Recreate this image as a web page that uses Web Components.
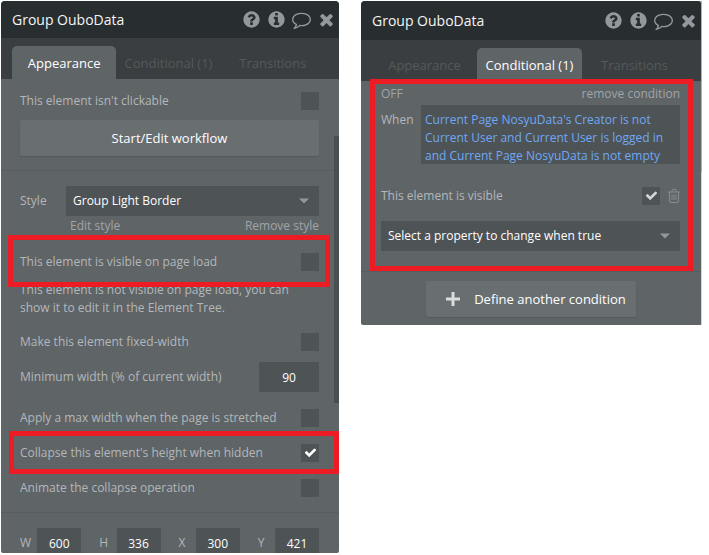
<!DOCTYPE html>
<html lang="en">
<head>
<meta charset="utf-8">
<title>Group OuboData</title>
<style>
    body {
        margin: 0;
        padding: 1px 7px 1px 1px;
        box-sizing: border-box;
        display: grid;
        grid-template-columns: minmax(0, 338fr) minmax(0, 341fr);
        gap: 22px;
        align-items: start;
        background: #ffffff;
        color: #b3b7ba;
        font: 12px/18px "Open Sans", "Noto Sans", sans-serif;
        --panel: #5f6467;
        --field: #4e5356;
        --button: #696e71;
        --line: #575c5f;
        --marker: #ed1c24;
    }
    property-panel.appearance {
        max-height: calc(100vh - 3px);
    }
    /* strip of the canvas showing along the right edge */
    property-panel.conditional {
        --header-height: 39px;
        border-right: 1px solid;
        border-image: linear-gradient(#d0b45c 171px, #d2d4d5 0) 1;
    }
    a {
        color: #a0a5a8;
        text-decoration: none;
    }
    p {
        margin: 0;
    }
    hr {
        margin: 0;
        border: 0;
        border-top: 1px solid var(--line);
    }
    .section {
        display: flex;
        flex-direction: column;
        padding: 0 20px 0 19px;
    }
    .first {
        padding-top: 4px;
        padding-bottom: 14px;
        gap: 2px;
    }
    .second {
        padding-top: 15px;
        padding-bottom: 7px;
    }
    .links {
        display: flex;
        justify-content: space-between;
        padding: 1px 0 9px 50px;
    }
    .note {
        padding: 2px 0 7px;
    }
    .wide-value {
        padding: 3px 0 8px;
    }
    .sizes {
        display: grid;
        grid-template-columns: repeat(4, minmax(0, 1fr));
        gap: 18px;
        padding-top: 15px;
        padding-bottom: 15px;
        --field-width: 44px;
    }
    .condition {
        padding: 4px 21px 20px 20px;
    }
    .condition-head {
        display: flex;
        justify-content: space-between;
        padding-bottom: 2px;
        color: #a0a5a8;
    }
    .property {
        display: grid;
        grid-template-columns: minmax(0, 1fr) 12px;
        gap: 8px;
        align-items: center;
        padding: 14px 0 8px;
    }
    .footer {
        display: flex;
        justify-content: center;
        padding: 9px 20px 8px;
    }
    marker-frame.load { --frame-inset: -9px -11px -8px -12px; }
    marker-frame.collapse { --frame-inset: -4px -20px -4px -11px; }
    marker-frame.whole { --frame-inset: -2px 8px 0 9px; }
    check-row.soft { --tick: #d3d6d8; }
    .footer panel-button { --button-padding: 0 10px 0 20px; }
</style>
</head>
<body>

<property-panel class="appearance" name="Group OuboData" active="0">
    <div class="section first">
        <check-row>This element isn't clickable</check-row>
        <panel-button>Start/Edit workflow</panel-button>
    </div>
    <hr>
    <div class="section second">
        <select-field label="Style" value="Group Light Border"></select-field>
        <div class="links"><a href="#edit">Edit style</a><a href="#remove">Remove style</a></div>
        <marker-frame class="load"><check-row>This element is visible on page load</check-row></marker-frame>
        <p class="note">This element is not visible on page load, you can show it to edit it in the Element Tree.</p>
        <check-row>Make this element fixed-width</check-row>
        <value-field class="wide-value" value="90">Minimum width (% of current width)</value-field>
        <check-row>Apply a max width when the page is stretched</check-row>
        <marker-frame class="collapse"><check-row checked>Collapse this element's height when hidden</check-row></marker-frame>
        <check-row>Animate the collapse operation</check-row>
    </div>
    <hr>
    <div class="section sizes">
        <value-field value="600">W</value-field>
        <value-field value="336">H</value-field>
        <value-field value="300">X</value-field>
        <value-field value="421">Y</value-field>
    </div>
    <scroll-thumb slot="over"></scroll-thumb>
</property-panel>

<property-panel class="conditional" name="Group OuboData" active="1">
    <marker-frame class="whole">
        <div class="section condition">
            <div class="condition-head"><span>OFF</span><a href="#remove-condition">remove condition</a></div>
            <expression-field label="When" value="Current Page NosyuData's Creator is not Current User and Current User is logged in and Current Page NosyuData is not empty"></expression-field>
            <div class="property">
                <check-row checked class="soft">This element is visible</check-row>
                <icon-button icon="trash" label="Delete property"></icon-button>
            </div>
            <select-field value="Select a property to change when true"></select-field>
        </div>
    </marker-frame>
    <hr>
    <div class="footer">
        <panel-button icon="plus">Define another condition</panel-button>
    </div>
</property-panel>

<script>
    const ICONS = {
        help: { box: "0 0 1792 1792", body: `<path d="M1024 1376v-192q0-14-9-23t-23-9h-192q-14 0-23 9t-9 23v192q0 14 9 23t23 9h192q14 0 23-9t9-23zm256-672q0-88-55.5-163t-138.5-116-170-41q-243 0-371 213-15 24 8 42l132 100q7 6 19 6 16 0 25-12 53-68 86-92 34-24 86-24 48 0 85.5 26t37.5 59q0 38-20 61t-68 45q-63 28-115.5 86.5t-52.5 125.5v36q0 14 9 23t23 9h192q14 0 23-9t9-23q0-19 21.5-49.5t54.5-49.5q32-18 49-28.5t46-35 44.5-48 28-60.5 12.5-81zm384 192q0 209-103 385.5t-279.5 279.5-385.5 103-385.5-103-279.5-279.5-103-385.5 103-385.5 279.5-279.5 385.5-103 385.5 103 279.5 279.5 103 385.5z"/>` },
        info: { box: "0 0 1792 1792", body: `<path d="M1152 1376v-160q0-14-9-23t-23-9h-96v-512q0-14-9-23t-23-9h-320q-14 0-23 9t-9 23v160q0 14 9 23t23 9h96v320h-96q-14 0-23 9t-9 23v160q0 14 9 23t23 9h448q14 0 23-9t9-23zm-128-896v-160q0-14-9-23t-23-9h-192q-14 0-23 9t-9 23v160q0 14 9 23t23 9h192q14 0 23-9t9-23zm640 416q0 209-103 385.5t-279.5 279.5-385.5 103-385.5-103-279.5-279.5-103-385.5 103-385.5 279.5-279.5 385.5-103 385.5 103 279.5 279.5 103 385.5z"/>` },
        comment: { box: "0 0 1792 1792", body: `<path d="M896 384q-204 0-381.5 69.5t-282 187.5-104.5 255q0 112 71.5 213.5t201.5 175.5l87 50-27 96q-24 91-70 172 152-63 275-171l43-38 57 6q69 8 130 8 204 0 381.5-69.5t282-187.5 104.5-255-104.5-255-282-187.5-381.5-69.5zm896 512q0 174-120 321.5t-326 233-450 85.5q-70 0-145-8-198 175-460 242-49 14-114 22h-5q-15 0-27-10.5t-16-27.5v-1q-3-4-.5-12t2-10 4.5-9.5l6-9 7-8.5 8-9q7-8 31-34.5t34.5-38 31-39.5 32.5-51 27-59 26-76q-157-89-247.5-220t-90.5-281q0-174 120-321.5t326-233 450-85.5 450 85.5 326 233 120 321.5z"/>` },
        close: { box: "0 0 1792 1792", body: `<path d="M1490 1322q0 40-28 68l-136 136q-28 28-68 28t-68-28l-294-294-294 294q-28 28-68 28t-68-28l-136-136q-28-28-28-68t28-68l294-294-294-294q-28-28-28-68t28-68l136-136q28-28 68-28t68 28l294 294 294-294q28-28 68-28t68 28l136 136q28 28 28 68t-28 68l-294 294 294 294q28 28 28 68z"/>` },
        check: { box: "0 0 1792 1792", body: `<path d="M1671 566q0 40-28 68l-724 724-136 136q-28 28-68 28t-68-28l-136-136-362-362q-28-28-28-68t28-68l136-136q28-28 68-28t68 28l294 295 656-657q28-28 68-28t68 28l136 136q28 28 28 68z"/>` },
        plus: { box: "0 0 14 14", body: `<path d="M5.5 0h3v5.5H14v3H8.5V14h-3V8.500H0v-3h5.500z"/>` },
        trash: { box: "0 0 12 14", body: `<path fill="none" stroke="currentColor" d="M0 3h12M4 3V1.500q0-1 1-1h2q1 0 1 1V3M1.500 3v9q0 1.500 1.500 1.500h6q1.500 0 1.500-1.500V3M4 5.500v5.500M6 5.500v5.500M8 5.500v5.500"/>` },
        caret: { box: "0 0 10 5", body: `<path d="M0 0h10L5 5z"/>` }
    };

    function icon(name, size) {
        const item = ICONS[name];
        return `<svg class="${name}" viewBox="${item.box}" width="${size}" height="${size}" fill="currentColor" aria-hidden="true">${item.body}</svg>`;
    }

    class IconButton extends HTMLElement {
        constructor() {
            super();
            this.attachShadow({ mode: "open" });
        }
        connectedCallback() {
            const size = this.getAttribute("size") || 14;
            this.shadowRoot.innerHTML = `
            <style>
                :host { display: block; }
                button {
                    display: flex;
                    justify-content: center;
                    width: 100%;
                    padding: 0;
                    border: 0;
                    background: none;
                    color: #92989b;
                    cursor: pointer;
                }
                svg { flex: none; }
                .trash { color: #878d90; }
            </style>
            <button type="button" aria-label="${this.getAttribute("label")}">${icon(this.getAttribute("icon"), size)}</button>
            `;
        }
    }

    class PropertyPanel extends HTMLElement {
        constructor() {
            super();
            this.attachShadow({ mode: "open" });
        }
        connectedCallback() {
            const active = Number(this.getAttribute("active"));
            const tabs = ["Appearance", "Conditional (1)", "Transitions"].map((text, i) =>
                `<button type="button" role="tab" aria-selected="${i === active}">${text}</button>`).join("");
            this.shadowRoot.innerHTML = `
            <style>
                :host {
                    display: block;
                    position: relative;
                    overflow: hidden;
                    border-radius: 4px 4px 2px 2px;
                    background: var(--panel);
                }
                header {
                    display: flex;
                    align-items: center;
                    justify-content: space-between;
                    height: var(--header-height, 37px);
                    padding: 0 3px 0 11px;
                    background: #282e30;
                }
                h2 {
                    margin: 0;
                    color: #f4f5f5;
                    font-size: 14px;
                    font-weight: 400;
                }
                .tools {
                    display: grid;
                    grid-template-columns: repeat(4, 19px);
                    gap: 6px;
                    align-items: center;
                }
                .tabs {
                    display: grid;
                    grid-template-columns: repeat(3, minmax(0, 1fr));
                    padding: 8px 14px 0 11px;
                    background: #3a3e40;
                }
                .tabs button {
                    height: 33px;
                    padding: 0;
                    border: 0;
                    border-radius: 5px 5px 0 0;
                    background: none;
                    color: #54595b;
                    font: inherit;
                    font-size: 13px;
                    white-space: nowrap;
                    cursor: pointer;
                }
                .tabs button[aria-selected="true"] {
                    background: var(--panel);
                    color: #ffffff;
                }
            </style>
            <header>
                <h2>${this.getAttribute("name")}</h2>
                <div class="tools">
                    <icon-button icon="help" size="19" label="Help"></icon-button>
                    <icon-button icon="info" size="19" label="Info"></icon-button>
                    <icon-button icon="comment" size="19" label="Comment"></icon-button>
                    <icon-button icon="close" size="19" label="Close"></icon-button>
                </div>
            </header>
            <div class="tabs" role="tablist">${tabs}</div>
            <slot></slot>
            <slot name="over"></slot>
            `;
            this.shadowRoot.querySelector(".tabs").addEventListener("click", (event) => this.select(event.target));
        }
        select(tab) {
            if (tab.getAttribute("role") !== "tab") return;
            this.shadowRoot.querySelectorAll("[role=tab]").forEach(item => {
                item.setAttribute("aria-selected", item === tab);
            });
        }
    }

    class CheckRow extends HTMLElement {
        constructor() {
            super();
            this.attachShadow({ mode: "open" });
            this.shadowRoot.innerHTML = `
            <style>
                :host {
                    display: flex;
                    align-items: center;
                    justify-content: space-between;
                    height: 35px;
                }
                label { white-space: nowrap; }
                .box {
                    display: grid;
                    place-items: center;
                    width: 18px;
                    height: 18px;
                    background: var(--field);
                    color: var(--tick, #ffffff);
                }
                input, svg { grid-area: 1 / 1; }
                input {
                    appearance: none;
                    width: 18px;
                    height: 18px;
                    margin: 0;
                }
                svg {
                    visibility: hidden;
                    pointer-events: none;
                }
                input:checked + svg { visibility: visible; }
            </style>
            <label for="check"><slot></slot></label>
            <span class="box"><input type="checkbox" id="check">${icon("check", 13)}</span>
            `;
        }
        connectedCallback() {
            this.shadowRoot.querySelector("input").checked = this.hasAttribute("checked");
        }
    }

    class ValueField extends HTMLElement {
        constructor() {
            super();
            this.attachShadow({ mode: "open" });
            this.shadowRoot.innerHTML = `
            <style>
                :host {
                    display: flex;
                    align-items: center;
                    justify-content: space-between;
                }
                label { white-space: nowrap; }
                input {
                    box-sizing: border-box;
                    width: var(--field-width, 60px);
                    height: 30px;
                    padding: 0;
                    border: 0;
                    background: var(--field);
                    color: #ffffff;
                    font: inherit;
                    text-align: center;
                }
            </style>
            <label for="value"><slot></slot></label>
            <input type="text" id="value">
            `;
        }
        connectedCallback() {
            this.shadowRoot.querySelector("input").value = this.getAttribute("value");
        }
    }

    class SelectField extends HTMLElement {
        constructor() {
            super();
            this.attachShadow({ mode: "open" });
        }
        connectedCallback() {
            const label = this.getAttribute("label");
            const value = this.getAttribute("value");
            this.shadowRoot.innerHTML = `
            <style>
                :host {
                    display: flex;
                    align-items: center;
                }
                label { width: 46px; }
                .field {
                    display: grid;
                    flex: 1;
                    align-items: center;
                    background: var(--field);
                }
                select, svg { grid-area: 1 / 1; }
                select {
                    appearance: none;
                    width: 100%;
                    height: 30px;
                    padding: 0 30px 0 7px;
                    border: 0;
                    background: none;
                    color: #ffffff;
                    font: inherit;
                }
                svg {
                    justify-self: end;
                    margin-right: 10px;
                    color: #92989b;
                    pointer-events: none;
                }
            </style>
            ${label ? `<label for="select">${label}</label>` : ""}
            <span class="field">
                <select id="select" aria-label="${label || value}"><option>${value}</option></select>
                ${icon("caret", 10)}
            </span>
            `;
        }
    }

    class ExpressionField extends HTMLElement {
        constructor() {
            super();
            this.attachShadow({ mode: "open" });
        }
        connectedCallback() {
            this.shadowRoot.innerHTML = `
            <style>
                :host {
                    display: grid;
                    grid-template-columns: 40px minmax(0, 1fr);
                }
                label { padding-top: 6px; }
                textarea {
                    display: block;
                    box-sizing: border-box;
                    height: 59px;
                    padding: 6px 0 0 4px;
                    border: 0;
                    overflow: hidden;
                    resize: none;
                    background: var(--field);
                    color: #6fa8f5;
                    font: inherit;
                }
            </style>
            <label for="text">${this.getAttribute("label")}</label>
            <textarea id="text" rows="3" spellcheck="false">${this.getAttribute("value")}</textarea>
            `;
        }
    }

    class PanelButton extends HTMLElement {
        constructor() {
            super();
            this.attachShadow({ mode: "open" });
        }
        connectedCallback() {
            const name = this.getAttribute("icon");
            this.shadowRoot.innerHTML = `
            <style>
                :host { display: block; }
                button {
                    display: flex;
                    align-items: center;
                    justify-content: center;
                    gap: 14px;
                    width: 100%;
                    height: 36px;
                    padding: var(--button-padding, 0);
                    border: 0;
                    border-radius: 2px;
                    background: var(--button);
                    box-shadow: 0 1px 1px #54595c;
                    color: #ffffff;
                    font: inherit;
                    font-size: 13px;
                    white-space: nowrap;
                    cursor: pointer;
                }
                svg { color: #d9dbdc; }
            </style>
            <button type="button">${name ? icon(name, 14) : ""}<slot></slot></button>
            `;
        }
    }

    // red outline laid over whatever it wraps
    class MarkerFrame extends HTMLElement {
        constructor() {
            super();
            this.attachShadow({ mode: "open" });
            this.shadowRoot.innerHTML = `
            <style>
                :host {
                    display: block;
                    position: relative;
                }
                .frame {
                    position: absolute;
                    inset: var(--frame-inset, 0);
                    border: 5px solid var(--marker);
                    pointer-events: none;
                }
            </style>
            <slot></slot>
            <div class="frame"></div>
            `;
        }
    }

    class ScrollThumb extends HTMLElement {
        constructor() {
            super();
            this.attachShadow({ mode: "open" });
            this.shadowRoot.innerHTML = `
            <style>
                :host {
                    position: absolute;
                    top: 135px;
                    right: 0;
                    width: 5px;
                    height: 267px;
                    background: #494e51;
                }
            </style>
            `;
        }
    }

    customElements.define("icon-button", IconButton);
    customElements.define("property-panel", PropertyPanel);
    customElements.define("check-row", CheckRow);
    customElements.define("value-field", ValueField);
    customElements.define("select-field", SelectField);
    customElements.define("expression-field", ExpressionField);
    customElements.define("panel-button", PanelButton);
    customElements.define("marker-frame", MarkerFrame);
    customElements.define("scroll-thumb", ScrollThumb);
</script>
</body>
</html>
